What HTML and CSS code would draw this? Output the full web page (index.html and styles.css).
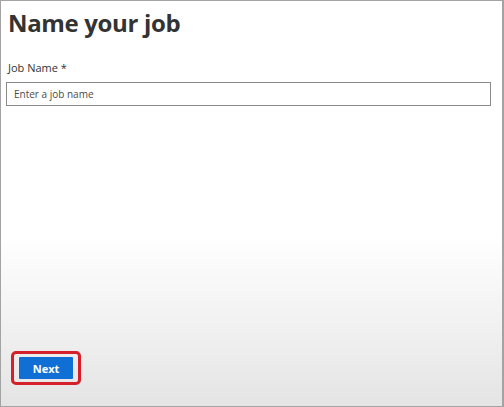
FILE: index.html
```html
<!DOCTYPE html>
<html>
<head>
<meta charset="utf-8">
<link rel="stylesheet" href="styles.css">
</head>
<body>
<div class="frame">
  <div class="content">
    <h1 class="title">Name your job</h1>
    <label class="label" for="jobname">Job Name *</label>
    <input class="input" id="jobname" type="text" placeholder="Enter a job name">
  </div>
  <div class="footer">
    <div class="highlight">
      <button class="btn">Next</button>
    </div>
  </div>
</div>
</body>
</html>
```
FILE: styles.css
```css
html, body {
  margin: 0;
  padding: 0;
}
body {
  width: 504px;
  height: 407px;
  overflow: hidden;
  font-family: "Open Sans", "Noto Sans", sans-serif;
}
.frame {
  box-sizing: border-box;
  width: 504px;
  height: 407px;
  border: 1px solid #a3a3a3;
  border-right-width: 2px;
  background: linear-gradient(to bottom, #ffffff 0%, #ffffff 58%, #e4e4e4 100%);
  display: flex;
  flex-direction: column;
  justify-content: space-between;
}
.content {
  display: flex;
  flex-direction: column;
  padding: 0 12px 0 5px;
}
.title {
  margin: 5px 0 0 2px;
  font-size: 24px;
  font-weight: 700;
  color: #333333;
  line-height: 34px;
  letter-spacing: -0.35px;
}
.label {
  margin: 21px 0 0 2px;
  font-size: 11px;
  color: #333333;
  line-height: 14px;
}
.input {
  box-sizing: border-box;
  margin-top: 7px;
  width: 485px;
  height: 24px;
  border: 1px solid #8a8a8a;
  padding: 0 7px;
  font-family: inherit;
  font-size: 10px;
  color: #333;
  background: #fff;
  outline: none;
}
.input::placeholder {
  color: #4a4a4a;
}
.footer {
  padding: 0 0 21px 10px;
}
.highlight {
  display: inline-flex;
  box-sizing: border-box;
  border: 3px solid #d4202b;
  border-radius: 5px;
  padding: 3px 5px;
}
.btn {
  box-sizing: border-box;
  width: 54px;
  height: 22px;
  border: none;
  border-radius: 1px;
  background: #0f6fd4;
  color: #ffffff;
  font-family: inherit;
  font-size: 11px;
  font-weight: 700;
  padding: 0;
}
```
